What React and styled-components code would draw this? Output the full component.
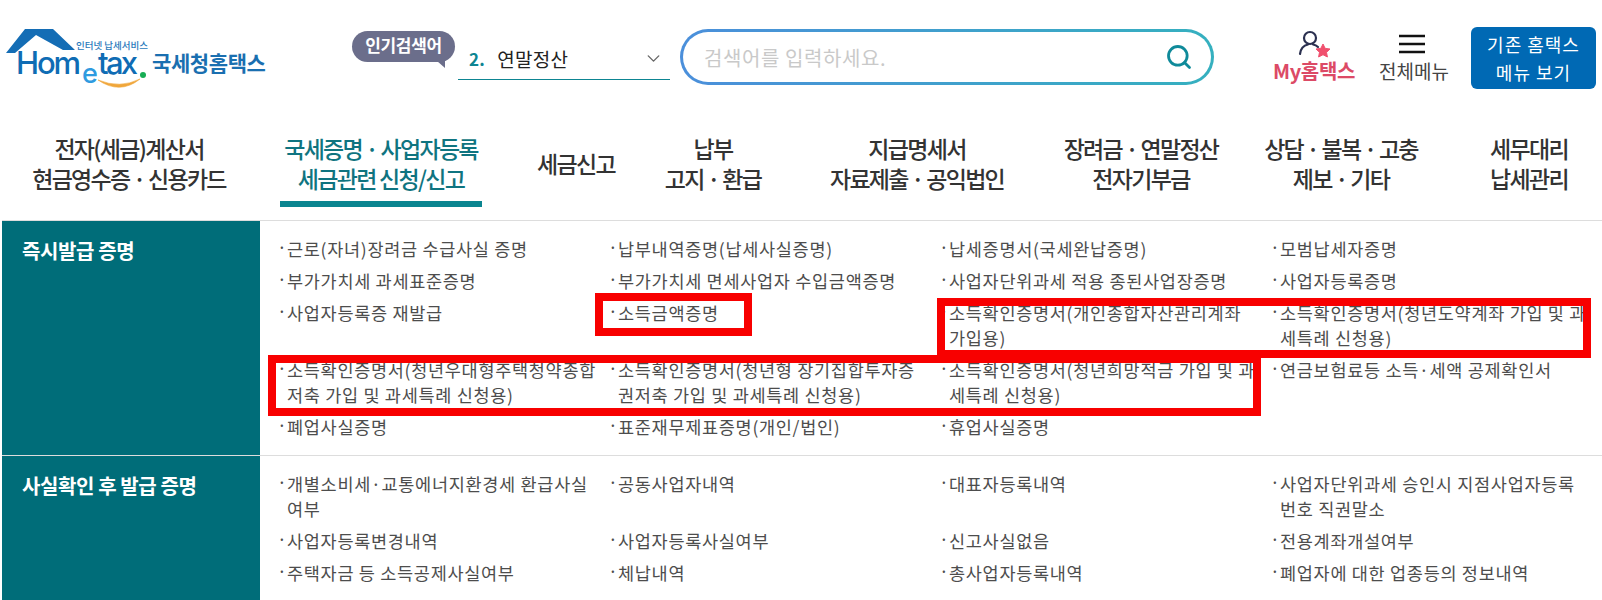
import styled, { createGlobalStyle } from "styled-components";
import { Search, ChevronDown } from "lucide-react";

const FONT = '"Noto Sans CJK KR", "Noto Sans", sans-serif';

const GlobalStyle = createGlobalStyle`
  html, body {
    margin: 0;
    padding: 0;
    background: #fff;
    font-family: ${FONT};
  }
`;

const Page = styled.div`
  position: relative;
  width: 1602px;
  height: 600px;
  overflow: hidden;
`;

const Header = styled.header`
  display: flex;
  align-items: flex-start;
  height: 116px;
`;

const LogoLink = styled.a`
  display: block;
  width: 275px;
  height: 70px;
  margin-top: 25px;
  flex: none;
`;

const Popular = styled.div`
  display: flex;
  align-items: flex-end;
  margin-left: 77px;
  margin-top: 31px;
  flex: none;
`;

const Bubble = styled.div`
  position: relative;
  width: 103px;
  height: 31px;
  margin-bottom: 18px;
  border-radius: 16px;
  background: #6b6e8b;
  color: #fff;
  font-size: 17px;
  font-weight: 700;
  line-height: 27px;
  letter-spacing: -0.3px;
  text-align: center;

  &::after {
    content: "";
    position: absolute;
    right: 10px;
    bottom: -6px;
    border-top: 7px solid #6b6e8b;
    border-left: 8px solid transparent;
  }
`;

const SelectBox = styled.div`
  display: flex;
  align-items: center;
  width: 212px;
  height: 42px;
  margin-left: 3px;
  padding: 0 6px 0 11px;
  box-sizing: border-box;
  border-bottom: 1px solid #0d8592;
  font-size: 19px;
  letter-spacing: 0.3px;
  color: #222;
`;

const SelectNum = styled.b`
  color: #0d8592;
  font-size: 17px;
  margin-right: 12px;
`;

const SelectText = styled.span`
  flex: 1;
`;

const SearchBox = styled.div`
  display: flex;
  align-items: center;
  width: 534px;
  height: 56px;
  margin-left: 10px;
  margin-top: 29px;
  padding: 0 18px 0 19px;
  box-sizing: border-box;
  flex: none;
  border: 3px solid transparent;
  border-radius: 28px;
  background:
    linear-gradient(#fff, #fff) padding-box,
    linear-gradient(90deg, #4b8fdb, #35b0bf) border-box;
`;

const SearchInput = styled.input`
  flex: 1;
  border: 0;
  outline: 0;
  background: none;
  font-family: ${FONT};
  font-size: 20px;
  letter-spacing: 0.6px;

  &::placeholder {
    color: #c9c9c9;
  }
`;

const Shortcut = styled.div`
  display: flex;
  flex-direction: column;
  align-items: center;
  width: ${(p) => p.$w}px;
  margin-left: ${(p) => p.$ml || 0}px;
  margin-top: 29px;
  flex: none;
`;

const IconSlot = styled.div`
  height: 29px;
  display: flex;
  align-items: center;
`;

const MyLabel = styled.span`
  color: #dc4a66;
  font-size: 20px;
  font-weight: 700;
  line-height: 26px;
  letter-spacing: -0.3px;
  white-space: nowrap;
`;

const MenuLabel = styled.span`
  margin-left: 4px;
  color: #444;
  font-size: 19px;
  line-height: 26px;
  white-space: nowrap;
`;

const OldMenuButton = styled.button`
  width: 125px;
  height: 62px;
  margin-left: 11px;
  margin-top: 27px;
  padding: 0;
  flex: none;
  border: 0;
  border-radius: 6px;
  background: #0069b4;
  color: #fff;
  font-family: ${FONT};
  font-size: 18px;
  line-height: 28px;
  letter-spacing: 1px;
`;

const Nav = styled.nav`
  display: flex;
  height: 79px;
  padding-top: 12px;
  margin-bottom: 13px;
`;

const NavItem = styled.a`
  display: flex;
  flex-direction: column;
  align-items: center;
  justify-content: center;
  width: ${(p) => p.$w}px;
  flex: none;
`;

const NavLabel = styled.span`
  display: flex;
  align-items: center;
  justify-content: center;
  flex: 1;
  width: ${(p) => (p.$active ? "202px" : "auto")};
  padding-bottom: 4px;
  border-bottom: 6px solid ${(p) => (p.$active ? "#0b8590" : "transparent")};
  color: ${(p) => (p.$active ? "#0f7480" : "#333")};
  font-size: 23px;
  font-weight: 500;
  line-height: 30px;
  letter-spacing: -1.7px;
  text-align: center;
  white-space: pre;
`;

const Section = styled.section`
  display: flex;
  margin-left: 2px;
  border-top: 1px solid #ddd;
`;

const SectionHead = styled.h2`
  width: 258px;
  margin: 0;
  padding: 15px 0 0 20px;
  box-sizing: border-box;
  flex: none;
  background: #006d79;
  color: #fff;
  font-size: 20px;
  font-weight: 700;
  line-height: 30px;
  letter-spacing: -0.4px;
`;

const ItemGrid = styled.ul`
  display: grid;
  grid-template-columns: repeat(4, 331px);
  row-gap: 7px;
  align-content: start;
  margin: 0;
  padding: 15px 0 16px 19px;
  list-style: none;
`;

const Item = styled.li`
  position: relative;
  padding-left: 8px;
  color: #4d4d4d;
  font-size: 17.5px;
  line-height: 25px;
  letter-spacing: 0.7px;
  white-space: pre;

  &::before {
    content: "·";
    position: absolute;
    left: -2px;
    top: -2px;
  }
`;

const Highlight = styled.div`
  position: absolute;
  left: ${(p) => p.$x}px;
  top: ${(p) => p.$y}px;
  width: ${(p) => p.$w}px;
  height: ${(p) => p.$h}px;
  box-sizing: border-box;
  border: 8px solid #f80000;
`;

const navItems = [
  { w: 258, label: "전자(세금)계산서\n현금영수증 · 신용카드" },
  { w: 246, label: "국세증명 · 사업자등록\n세금관련 신청/신고", active: true },
  { w: 144, label: "세금신고" },
  { w: 130, label: "납부\n고지 · 환급" },
  { w: 278, label: "지급명세서\n자료제출 · 공익법인" },
  { w: 170, label: "장려금 · 연말정산\n전자기부금" },
  { w: 230, label: "상담 · 불복 · 고충\n제보 · 기타" },
  { w: 146, label: "세무대리\n납세관리" },
];

const instantItems = [
  "근로(자녀)장려금 수급사실 증명",
  "납부내역증명(납세사실증명)",
  "납세증명서(국세완납증명)",
  "모범납세자증명",
  "부가가치세 과세표준증명",
  "부가가치세 면세사업자 수입금액증명",
  "사업자단위과세 적용 종된사업장증명",
  "사업자등록증명",
  "사업자등록증 재발급",
  "소득금액증명",
  "소득확인증명서(개인종합자산관리계좌\n가입용)",
  "소득확인증명서(청년도약계좌 가입 및 과\n세특례 신청용)",
  "소득확인증명서(청년우대형주택청약종합\n저축 가입 및 과세특례 신청용)",
  "소득확인증명서(청년형 장기집합투자증\n권저축 가입 및 과세특례 신청용)",
  "소득확인증명서(청년희망적금 가입 및 과\n세특례 신청용)",
  "연금보험료등 소득·세액 공제확인서",
  "폐업사실증명",
  "표준재무제표증명(개인/법인)",
  "휴업사실증명",
];

const factItems = [
  "개별소비세·교통에너지환경세 환급사실\n여부",
  "공동사업자내역",
  "대표자등록내역",
  "사업자단위과세 승인시 지점사업자등록\n번호 직권말소",
  "사업자등록변경내역",
  "사업자등록사실여부",
  "신고사실없음",
  "전용계좌개설여부",
  "주택자금 등 소득공제사실여부",
  "체납내역",
  "총사업자등록내역",
  "폐업자에 대한 업종등의 정보내역",
];

const Logo = () => (
  <svg width="275" height="70" viewBox="0 25 275 70">
    <path d="M6 53 L25 29 H53 L75 50 H63 L36 35 L15 53 Z" fill="#146db5" />
    <text x="76" y="49" fontFamily={FONT} fontSize="9.5" fontWeight="500" fill="#2a79bb">
      인터넷 납세서비스
    </text>
    <text x="16" y="74" fontFamily="Inter, sans-serif" fontSize="31" fontWeight="500" textLength="65" fill="#0f6cb4">
      Hom
    </text>
    <text x="82" y="83" fontFamily="Inter, sans-serif" fontSize="27" fontWeight="500" fill="#2f9be0">
      e
    </text>
    <text x="98" y="74" fontFamily="Inter, sans-serif" fontSize="31" fontWeight="500" textLength="40" fill="#0f6cb4">
      tax
    </text>
    <circle cx="143" cy="75" r="3" fill="#17ad54" />
    <path d="M98 80 Q120 95 140 79 Q120 89 98 80 Z" fill="#f0a63a" stroke="#f0a63a" strokeWidth="0.6" />
    <text x="152" y="71" fontFamily={FONT} fontSize="21" fontWeight="700" letterSpacing="-0.4" fill="#1a6fb0">
      국세청홈택스
    </text>
  </svg>
);

const UserStarIcon = () => (
  <svg width="36" height="30" viewBox="0 0 36 30">
    <circle cx="14" cy="9" r="6" fill="none" stroke="#2b3050" strokeWidth="2.2" />
    <path d="M4 25 Q5 17 12 15.5 M17 15.5 Q20 16 22 18" fill="none" stroke="#2b3050" strokeWidth="2.2" strokeLinecap="round" />
    <path
      d="M27 15 L29.2 19.4 L34 20 L30.5 23.3 L31.4 28 L27 25.7 L22.6 28 L23.5 23.3 L20 20 L24.8 19.4 Z"
      fill="#f0506e"
      stroke="#f0506e"
      strokeLinejoin="round"
    />
  </svg>
);

const MenuIcon = () => (
  <svg width="26" height="20" viewBox="0 0 26 20">
    <path d="M0 2 H26 M0 10 H26 M0 18 H26" stroke="#111" strokeWidth="2.6" />
  </svg>
);

const App = () => {
  return (
    <Page>
      <GlobalStyle />
      <Header>
        <LogoLink>
          <Logo />
        </LogoLink>
        <Popular>
          <Bubble>인기검색어</Bubble>
          <SelectBox>
            <SelectNum>2.</SelectNum>
            <SelectText>연말정산</SelectText>
            <ChevronDown size={21} color="#666" strokeWidth={1.6} />
          </SelectBox>
        </Popular>
        <SearchBox>
          <SearchInput placeholder="검색어를 입력하세요." />
          <Search size={28} color="#0f8a9a" strokeWidth={2.4} />
        </SearchBox>
        <Shortcut $w={100} $ml={50}>
          <IconSlot>
            <UserStarIcon />
          </IconSlot>
          <MyLabel>My홈택스</MyLabel>
        </Shortcut>
        <Shortcut $w={96}>
          <IconSlot>
            <MenuIcon />
          </IconSlot>
          <MenuLabel>전체메뉴</MenuLabel>
        </Shortcut>
        <OldMenuButton>
          기존 홈택스
          <br />
          메뉴 보기
        </OldMenuButton>
      </Header>
      <Nav>
        {navItems.map((item) => (
          <NavItem key={item.label} $w={item.w}>
            <NavLabel $active={item.active}>{item.label}</NavLabel>
          </NavItem>
        ))}
      </Nav>
      <Section>
        <SectionHead>즉시발급 증명</SectionHead>
        <ItemGrid>
          {instantItems.map((text) => (
            <Item key={text}>{text}</Item>
          ))}
        </ItemGrid>
      </Section>
      <Section>
        <SectionHead>사실확인 후 발급 증명</SectionHead>
        <ItemGrid>
          {factItems.map((text) => (
            <Item key={text}>{text}</Item>
          ))}
        </ItemGrid>
      </Section>
      <Highlight $x={595} $y={293} $w={157} $h={43} />
      <Highlight $x={937} $y={298} $w={654} $h={60} />
      <Highlight $x={268} $y={355} $w={993} $h={61} />
    </Page>
  );
};

export default App;
